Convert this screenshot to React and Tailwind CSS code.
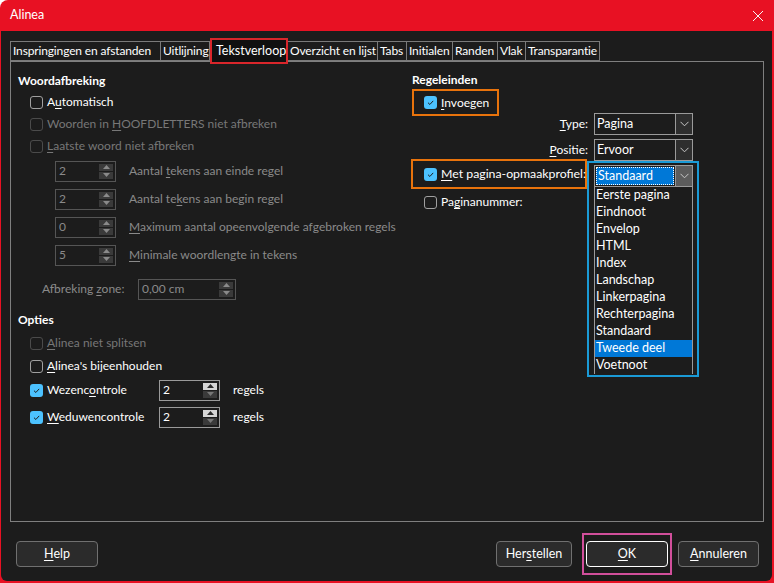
import React from 'react';

const font = { fontFamily: 'Lato, "Noto Sans", sans-serif' };

const U = ({ children }) => <span className="underline underline-offset-2">{children}</span>;

const Box = ({ checked, disabled }) => {
  if (checked) {
    return (
      <span className="w-[13px] h-[13px] rounded-[3px] bg-[#4cc2ff] flex items-center justify-center shrink-0">
        <svg width="9" height="9" viewBox="0 0 10 10">
          <path d="M2.2 5.2 L4.3 7.2 L8 3.2" stroke="#1b1b1b" strokeWidth="1.1" fill="none" />
        </svg>
      </span>
    );
  }
  return (
    <span
      className={`w-[13px] h-[13px] rounded-[3px] border shrink-0 ${disabled ? 'border-[#4b4b4b]' : 'border-[#a0a0a0]'}`}
    />
  );
};

const Check = ({ checked, disabled, children, className = '' }) => (
  <div className={`flex items-center gap-[4px] ${disabled ? 'text-[#777]' : 'text-white'} ${className}`}>
    <Box checked={checked} disabled={disabled} />
    <span>{children}</span>
  </div>
);

const Arrow = ({ up, color }) => (
  <svg width="7" height="4" viewBox="0 0 7 4">
    <path d={up ? 'M0 4 L3.5 0 L7 4 Z' : 'M0 0 L3.5 4 L7 0 Z'} fill={color} />
  </svg>
);

const Spin = ({ value, width = 'w-[61px]', enabled }) => (
  <div
    className={`${width} h-[21px] border flex items-stretch shrink-0 ${
      enabled ? 'border-[#9a9a9a] text-white' : 'border-[#555] text-[#8a8a8a]'
    }`}
  >
    <span className="flex-1 pl-[3px] flex items-center">{value}</span>
    <div className="w-[14px] my-[2px] mr-[2px] flex flex-col gap-px">
      <div className={`flex-1 flex items-center justify-center ${enabled ? 'bg-[#d6d6d6]' : 'bg-[#3a3a3a]'}`}>
        <Arrow up color={enabled ? '#2a2a2a' : '#8a8a8a'} />
      </div>
      <div className="flex-1 flex items-center justify-center bg-[#3a3a3a]">
        <Arrow color={enabled ? '#777' : '#8a8a8a'} />
      </div>
    </div>
  </div>
);

const Chevron = () => (
  <svg width="9" height="6" viewBox="0 0 9 6">
    <path d="M0.5 0.8 L4.5 4.8 L8.5 0.8" stroke="#c8c8c8" strokeWidth="1" fill="none" />
  </svg>
);

const Combo = ({ value }) => (
  <div className="w-[99px] h-[22px] border border-[#9a9a9a] flex items-stretch text-white">
    <span className="flex-1 pl-[2px] flex items-center text-[12.5px]">{value}</span>
    <div className="w-[17px] border-l border-[#9a9a9a] bg-[#2e2e2e] flex items-center justify-center">
      <Chevron />
    </div>
  </div>
);

const tabs = [
  ['Inspringingen en afstanden', 'w-[151px]'],
  ['Uitlijning', 'w-[50px]'],
  ['Tekstverloop', 'active'],
  ['Overzicht en lijst', 'w-[91px]'],
  ['Tabs', 'w-[30px]'],
  ['Initialen', 'w-[47px]'],
  ['Randen', 'w-[46px]'],
  ['Vlak', 'w-[29px]'],
  ['Transparantie', 'w-[75px]'],
];

const pageStyles = [
  'Eerste pagina',
  'Eindnoot',
  'Envelop',
  'HTML',
  'Index',
  'Landschap',
  'Linkerpagina',
  'Rechterpagina',
  'Standaard',
  'Tweede deel',
  'Voetnoot',
];

const SpinRow = ({ value, children, h }) => (
  <div className={`${h} flex items-center pl-[37px] gap-[13px] text-[#8a8a8a]`}>
    <Spin value={value} />
    <span>{children}</span>
  </div>
);

const Button = ({ children, className = '' }) => (
  <button
    className={`h-[26px] rounded-[4px] bg-[#2b2b2b] border text-white text-[12.5px] flex items-center justify-center ${className}`}
  >
    {children}
  </button>
);

export default function App() {
  return (
    <div
      style={font}
      className="w-[774px] h-[583px] bg-[#e81123] rounded-tl-[8px] flex flex-col text-[12px] leading-none whitespace-nowrap"
    >
      {/* title bar */}
      <div className="h-[31px] flex items-center justify-between pl-[10px] pr-[10px] text-white text-[12.5px]">
        <span>Alinea</span>
        <svg width="12" height="12" viewBox="0 0 12 12">
          <path d="M1 1 L11 11 M11 1 L1 11" stroke="#f4f4f4" strokeWidth="1" />
        </svg>
      </div>

      <div className="flex-1 ml-[1px] mr-[2px] mb-[2px] bg-[#1c1c1c] rounded-b-[6px] flex flex-col">
        {/* tabs */}
        <div className="pt-[10px] pl-[9px] flex h-[30px] text-white">
          {tabs.map(([name, w]) =>
            w === 'active' ? (
              <div
                key={name}
                className="w-[78px] h-[26px] -mt-[3px] border-[2px] border-[#d9262b] bg-[#101010] relative z-10 flex items-center pl-[4px] text-[12.5px]"
              >
                {name}
              </div>
            ) : (
              <div
                key={name}
                className={`${w} h-[20px] border border-[#7a7a7a] -ml-px first:ml-0 flex items-center pl-[2px] tracking-[-0.15px]`}
              >
                {name}
              </div>
            )
          )}
        </div>

        {/* panel */}
        <div className="ml-[9px] mr-[8px] h-[461px] border border-[#7f7f7f] pt-[9px] pl-[7px] flex">
          {/* left column */}
          <div className="w-[393px] flex flex-col">
            <div className="h-[20px] flex items-center font-bold text-white">Woordafbreking</div>
            <Check className="h-[22px] pl-[12px]">
              A<U>u</U>tomatisch
            </Check>
            <Check disabled className="h-[22px] pl-[12px]">
              Woorden in <U>H</U>OOFDLETTERS niet afbreken
            </Check>
            <Check disabled className="h-[22px] pl-[12px]">
              <U>L</U>aatste woord niet afbreken
            </Check>
            <SpinRow value="2" h="h-[28px]">
              Aantal <U>t</U>ekens aan einde regel
            </SpinRow>
            <SpinRow value="2" h="h-[28px]">
              Aantal te<U>k</U>ens aan begin regel
            </SpinRow>
            <SpinRow value="0" h="h-[28px]">
              <U>M</U>aximum aantal opeenvolgende afgebroken regels
            </SpinRow>
            <SpinRow value="5" h="h-[28px]">
              <U>M</U>inimale woordlengte in tekens
            </SpinRow>
            <div className="h-[40px] flex items-center pl-[24px] text-[#8a8a8a]">
              <span className="w-[96px]">
                Afbreking <U>z</U>one:
              </span>
              <Spin value="0,00 cm" width="w-[98px]" />
            </div>
            <div className="h-[22px] flex items-center font-bold text-white">Opties</div>
            <Check disabled className="h-[24px] pl-[12px]">
              <U>A</U>linea niet splitsen
            </Check>
            <Check className="h-[22px] pl-[12px]">
              <U>A</U>linea's bijeenhouden
            </Check>
            <div className="h-[26px] flex items-center pl-[12px]">
              <Check checked className="w-[129px]">
                Wezenc<U>o</U>ntrole
              </Check>
              <Spin value="2" enabled />
              <span className="ml-[13px] text-white">regels</span>
            </div>
            <div className="h-[28px] flex items-center pl-[12px]">
              <Check checked className="w-[129px]">
                <U>W</U>eduwencontrole
              </Check>
              <Spin value="2" enabled />
              <span className="ml-[13px] text-white">regels</span>
            </div>
          </div>

          {/* right column */}
          <div className="w-[288px] flex flex-col text-white">
            <div className="h-[18px] flex items-center font-bold pl-[1px]">Regeleinden</div>
            <div className="ml-[1px] w-[87px] h-[27px] border-[2px] border-[#e8730c] flex items-center pl-[10px]">
              <Check checked>
                <U>I</U>nvoegen
              </Check>
            </div>
            <div className="-mt-[3px] h-[22px] flex items-center justify-end gap-[6px] pr-[6px]">
              <span>
                <U>T</U>ype:
              </span>
              <Combo value="Pagina" />
            </div>
            <div className="mt-[4px] h-[22px] flex items-center justify-end gap-[6px] pr-[6px]">
              <span>
                <U>P</U>ositie:
              </span>
              <Combo value="Ervoor" />
            </div>
            <div className="-mt-[2px] flex">
              <div className="w-[176px] flex flex-col">
                <div className="h-[30px] border-[2px] border-[#e8730c] flex items-center pl-[11px]">
                  <Check checked>
                    <span className="text-[12.3px]">
                      <U>M</U>et pagina-opmaakprofiel:
                    </span>
                  </Check>
                </div>
                <Check className="h-[26px] pl-[13px]">
                  Pa<U>g</U>inanummer:
                </Check>
              </div>
              <div className="mt-[2px] w-[112px] h-[216px] border-[2px] border-[#1a9ad6] pl-[5px] pt-[2px] text-[12.5px]">
                <div className="w-[99px] h-[22px] border border-[#9a9a9a] flex items-stretch">
                  <span className="flex-1 m-px bg-[#0078d7] border border-dotted border-white flex items-center pl-px">
                    Standaard
                  </span>
                  <div className="w-[17px] border-l border-[#9a9a9a] bg-[#5c5c5c] flex items-center justify-center">
                    <Chevron />
                  </div>
                </div>
                <div className="w-[99px] border-x border-[#9a9a9a] flex flex-col">
                  {pageStyles.map((s) => (
                    <div
                      key={s}
                      className={`h-[17px] flex items-center pl-px ${s === 'Tweede deel' ? 'bg-[#0078d7]' : ''}`}
                    >
                      {s}
                    </div>
                  ))}
                </div>
              </div>
            </div>
          </div>
        </div>

        {/* footer */}
        <div className="pt-[19px] flex items-start">
          <Button className="ml-[15px] w-[82px] border-[#707070]">
            <U>H</U>elp
          </Button>
          <div className="ml-auto mr-[13px] flex items-center">
            <Button className="w-[76px] border-[#707070]">
              Her<U>s</U>tellen
            </Button>
            <div className="ml-[10px] -my-[11px] w-[90px] h-[42px] border-[2px] border-[#d14f9b] flex items-center justify-center">
              <Button className="w-[82px] border-white">
                <U>O</U>K
              </Button>
            </div>
            <Button className="ml-[6px] w-[81px] border-[#707070]">
              <U>A</U>nnuleren
            </Button>
          </div>
        </div>
      </div>
    </div>
  );
}
